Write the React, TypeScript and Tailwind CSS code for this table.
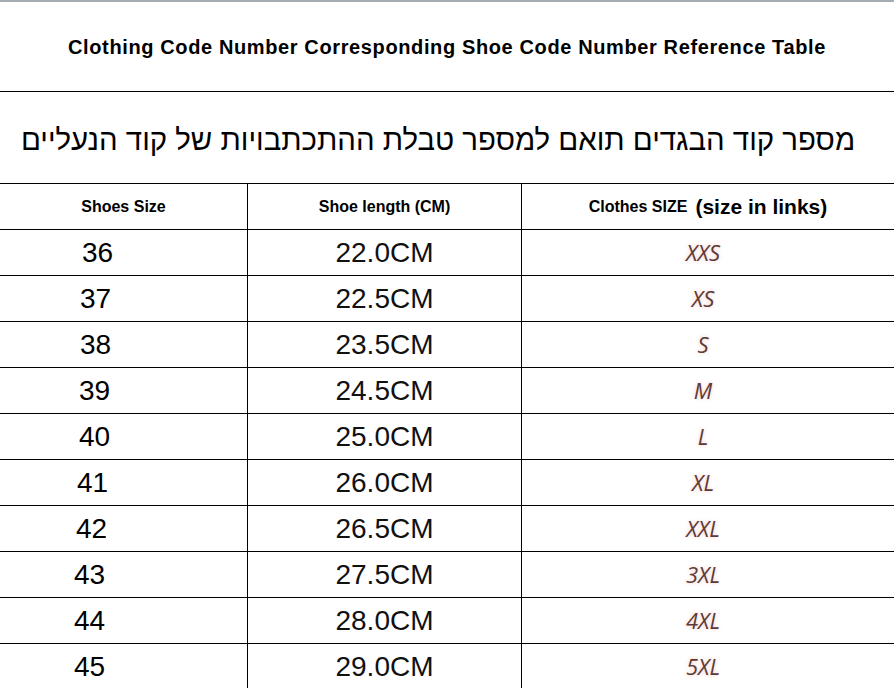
const rows = [
  { shoe: "36", length: "22.0CM", size: "XXS", pad: "pl-[82px]" },
  { shoe: "37", length: "22.5CM", size: "XS", pad: "pl-[80px]" },
  { shoe: "38", length: "23.5CM", size: "S", pad: "pl-[80px]" },
  { shoe: "39", length: "24.5CM", size: "M", pad: "pl-[79px]" },
  { shoe: "40", length: "25.0CM", size: "L", pad: "pl-[79px]" },
  { shoe: "41", length: "26.0CM", size: "XL", pad: "pl-[77px]" },
  { shoe: "42", length: "26.5CM", size: "XXL", pad: "pl-[76px]" },
  { shoe: "43", length: "27.5CM", size: "3XL", pad: "pl-[74px]" },
  { shoe: "44", length: "28.0CM", size: "4XL", pad: "pl-[74px]" },
  { shoe: "45", length: "29.0CM", size: "5XL", pad: "pl-[74px]" },
];

const App = () => (
  <div className="h-[688px] w-[894px] overflow-hidden bg-white font-['Liberation_Sans',Arial,sans-serif] text-black">
    <div className="flex h-[92px] items-center justify-center border-t-2 border-b border-t-[#a3adb3] border-b-black">
      <h1 className="text-[20px] font-bold tracking-[0.62px]">
        Clothing Code Number Corresponding Shoe Code Number Reference Table
      </h1>
    </div>
    <div className="flex h-[92px] items-center justify-center border-b border-black pt-[4px] pr-[18px]">
      <p dir="rtl" className="text-[29.4px] leading-none">
        מספר קוד הבגדים תואם למספר טבלת ההתכתבויות של קוד הנעליים
      </p>
    </div>
    <div className="grid grid-cols-[248px_274px_1fr]">
      <div className="flex h-[46px] items-center justify-center border-r border-b border-black text-[16px] font-bold">
        Shoes Size
      </div>
      <div className="flex h-[46px] items-center justify-center border-r border-b border-black text-[16px] font-bold">
        Shoe length (CM)
      </div>
      <div className="flex h-[46px] items-center justify-center gap-[8px] border-b border-black font-bold">
        <span className="text-[16px]">Clothes SIZE</span>
        <span className="text-[21px]">(size in links)</span>
      </div>
      {rows.map((row) => (
        <div key={row.shoe} className="contents">
          <div className={`flex h-[46px] items-center border-r border-b border-black text-[28px] ${row.pad}`}>
            {row.shoe}
          </div>
          <div className="flex h-[46px] items-center justify-center border-r border-b border-black text-[28px] text-[#111]">
            {row.length}
          </div>
          <div className="flex h-[46px] items-center justify-center border-b border-black pr-[10px]">
            <span className="font-['Open_Sans',sans-serif] text-[22px] italic text-[#5b3a38] [text-shadow:0_0_4px_#f6c6bc]">
              {row.size}
            </span>
          </div>
        </div>
      ))}
    </div>
  </div>
);

export default App;
